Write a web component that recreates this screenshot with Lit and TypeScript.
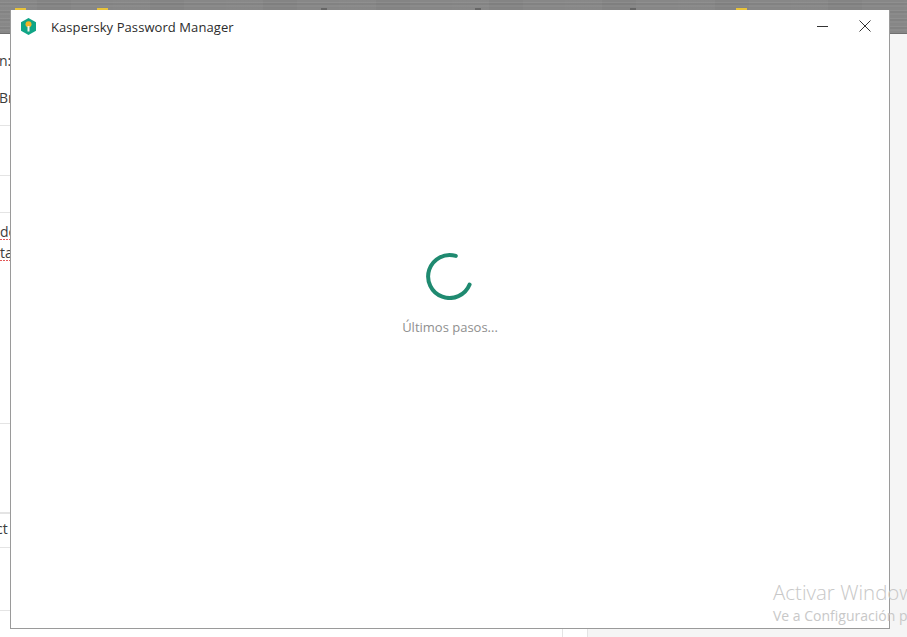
import { LitElement, html, css } from "lit";
import { customElement } from "lit/decorators.js";

@customElement("app-root")
export class AppRoot extends LitElement {
  static styles = css`
    :host {
      display: block;
      position: relative;
      width: 907px;
      height: 637px;
      overflow: hidden;
      background: #fff;
      font-family: "Open Sans", "Noto Sans", sans-serif;
    }
    .topbar {
      position: absolute;
      left: 0;
      top: 0;
      width: 100%;
      height: 34px;
      box-sizing: border-box;
      border-bottom: 1px solid #6f6f6f;
      background:
        repeating-linear-gradient(90deg, rgba(255,255,255,.015) 0 37px, rgba(0,0,0,.015) 37px 71px, rgba(255,255,255,.01) 71px 113px),
        repeating-linear-gradient(180deg, #868686 0 2px, #8e8e8e 2px 3px, #818181 3px 5px, #8a8a8a 5px 7px, #858585 7px 8px);
    }
    .mark {
      position: absolute;
      top: 8px;
      height: 2px;
    }
    .mark.y { background: #e8c33a; width: 11px; }
    .mark.d { background: #666; width: 6px; }
    .side {
      position: absolute;
      left: 889px;
      top: 34px;
      right: 0;
      bottom: 0;
      background: #f5f5f5;
    }
    .bottompane {
      position: absolute;
      left: 587px;
      right: 0;
      top: 629px;
      bottom: 0;
      background: #f5f5f5;
      border-left: 1px solid #e4e4e4;
    }
    .vline {
      position: absolute;
      left: 562px;
      top: 629px;
      bottom: 0;
      width: 1px;
      background: #e4e4e4;
    }
    .rule {
      position: absolute;
      left: 0;
      width: 11px;
      height: 1px;
      background: #e4e4e4;
    }
    .frag {
      position: absolute;
      left: 0;
      width: 10px;
      overflow: hidden;
      white-space: nowrap;
      font-size: 14px;
      line-height: 20px;
      color: #3c3c3c;
    }
    .frag.b { text-indent: -1px; }
    .frag.shift { text-indent: -4px; }
    .frag.shift2 { text-indent: -4.5px; }
    .squig {
      position: absolute;
      left: 0;
      width: 10px;
      height: 1px;
      background: repeating-linear-gradient(90deg, #e25a5a 0 2px, transparent 2px 3px);
    }
    .window {
      position: absolute;
      left: 10px;
      top: 10px;
      width: 880px;
      height: 619px;
      box-sizing: border-box;
      display: flex;
      flex-direction: column;
      background: #fff;
      border-left: 1px solid #9a9a9a;
      border-right: 1px solid #9a9a9a;
      border-bottom: 1px solid #9a9a9a;
    }
    .title {
      display: flex;
      align-items: center;
      height: 34px;
      flex: none;
      padding-left: 10px;
      font-size: 13px;
      letter-spacing: 0.08px;
      color: #2c2c2c;
    }
    .logo {
      width: 15px;
      height: 17px;
      margin-right: 15px;
      flex: none;
      position: relative;
      top: -1px;
    }
    .controls {
      margin-left: auto;
      display: flex;
      align-items: center;
      gap: 31px;
      padding-right: 18px;
      position: relative;
      top: -1px;
    }
    .controls svg { display: block; }
    .body {
      flex: 1;
      display: flex;
      flex-direction: column;
      align-items: center;
      padding-top: 208px;
      box-sizing: border-box;
    }
    .spinner { display: block; position: relative; left: -1px; }
    .status {
      margin-top: 18px;
      font-size: 13px;
      line-height: 18px;
      color: #8f8f8f;
    }
    .watermark {
      position: absolute;
      left: 773px;
      top: 580px;
      white-space: nowrap;
      color: #c8c8c8;
      pointer-events: none;
    }
    .wm1 { font-size: 20.5px; line-height: 25px; font-weight: 300; }
    .wm2 { font-size: 14px; line-height: 20px; margin-top: 1px; }
  `;

  render() {
    const marks = [
      ["y", 15], ["y", 97], ["d", 321], ["d", 475], ["d", 630], ["y", 736],
    ];
    const rules = [125, 175, 212, 423, 512, 513, 547, 610];
    return html`
      <div class="topbar">
        ${marks.map(([k, x]) => html`<span class="mark ${k}" style="left:${x}px"></span>`)}
      </div>
      <div class="side"></div>
      <div class="vline"></div>
      <div class="bottompane"></div>
      ${rules.map((y) => html`<div class="rule" style="top:${y}px"></div>`)}
      <div class="frag shift2" style="top:51px">in:</div>
      <div class="frag b" style="top:88px">Br</div>
      <div class="frag" style="top:222px">do</div>
      <div class="squig" style="top:239px"></div>
      <div class="frag" style="top:243px">ta</div>
      <div class="squig" style="top:260px"></div>
      <div class="frag shift" style="top:519px">ct</div>

      <div class="window">
        <div class="title">
          <svg class="logo" viewBox="0 0 15 17">
            <path d="M7.5 0 15 4.25v8.5L7.5 17 0 12.75v-8.5z" fill="#10a586" />
            <circle cx="7.5" cy="6.2" r="3" fill="#f5b324" />
            <rect x="6.5" y="8" width="2" height="5.5" fill="#f4f4e8" />
          </svg>
          <span>Kaspersky Password Manager</span>
          <div class="controls">
            <svg width="11" height="11" viewBox="0 0 11 11">
              <path d="M0 5.5h11" stroke="#333" stroke-width="1" fill="none" />
            </svg>
            <svg width="12" height="12" viewBox="0 0 12 12">
              <path d="M.5.5l11 11M11.5.5l-11 11" stroke="#333" stroke-width="1" fill="none" />
            </svg>
          </div>
        </div>
        <div class="body">
          <svg class="spinner" width="48" height="48" viewBox="0 0 48 48">
            <path
              d="M30.8 3.9 A21.5 21.5 0 1 0 44.6 32.5"
              fill="none"
              stroke="#1f8a70"
              stroke-width="4"
              stroke-linecap="round"
            />
          </svg>
          <div class="status">Últimos pasos...</div>
        </div>
      </div>

      <div class="watermark">
        <div class="wm1">Activar Windows</div>
        <div class="wm2">Ve a Configuración para activar Windows.</div>
      </div>
    `;
  }
}
